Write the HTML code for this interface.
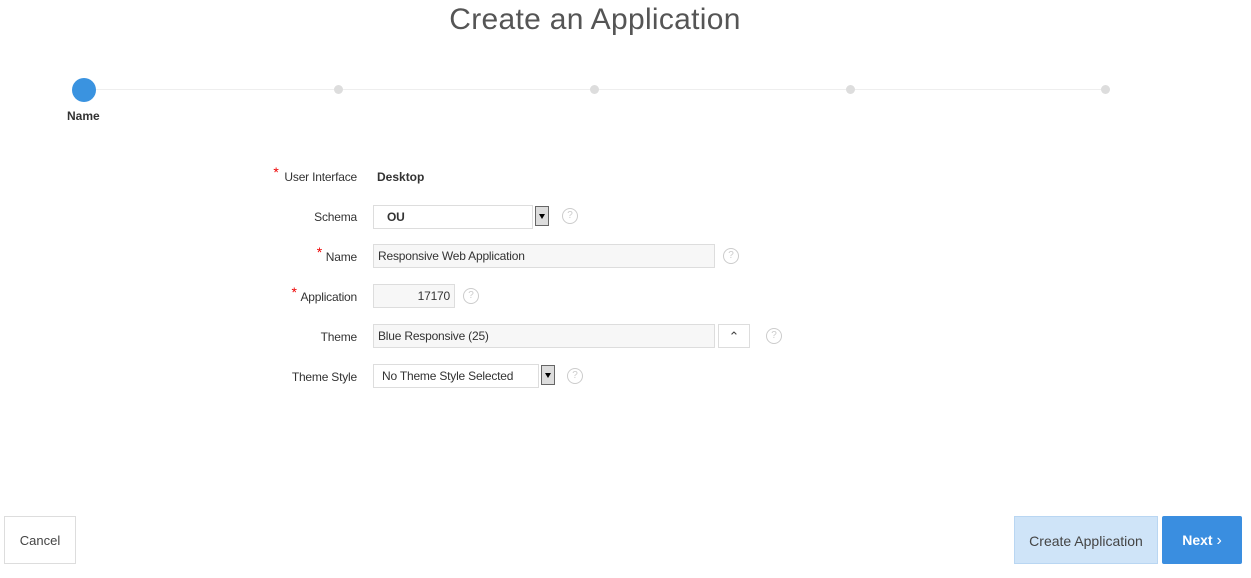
<!DOCTYPE html>
<html><head><style>
body{margin:0;width:1251px;height:578px;background:#fff;font-family:"Liberation Sans",sans-serif;position:relative;overflow:hidden;color:#333}
.a{position:absolute}
h1{position:absolute;left:0;width:1190px;text-align:center;top:3px;margin:0;font-weight:normal;font-size:30px;color:#555;letter-spacing:0.3px}
.lbl{position:absolute;right:894px;font-size:12px;color:#333;text-align:right;letter-spacing:-0.2px}
.req{color:#e00;font-size:14px;position:absolute;top:-6px;left:-9px}
.in{position:absolute;border:1px solid #ddd;background:#f7f7f7;font-size:12px;line-height:22px;padding:0 4px;box-sizing:border-box;height:24px;letter-spacing:-0.2px}
.help{position:absolute;width:14px;height:14px;border:1px solid #ccc;border-radius:50%;font-size:10px;color:#ccc;text-align:center;line-height:14px}
.dd{position:absolute;width:14px;height:20px;background:#ddd;border:1px solid #666;box-sizing:border-box}
.dd:after{content:"";position:absolute;left:3px;top:7px;border:3px solid transparent;border-top:5px solid #000}
</style></head><body>
<h1>Create an Application</h1>
<div class="a" style="left:84px;top:89px;width:1022px;height:1px;background:#eee"></div>
<div class="a" style="left:72px;top:78px;width:24px;height:24px;border-radius:50%;background:#3a93e0"></div>
<div class="a" style="left:334px;top:85px;width:9px;height:9px;border-radius:50%;background:#ddd"></div>
<div class="a" style="left:590px;top:85px;width:9px;height:9px;border-radius:50%;background:#ddd"></div>
<div class="a" style="left:846px;top:85px;width:9px;height:9px;border-radius:50%;background:#ddd"></div>
<div class="a" style="left:1101px;top:85px;width:9px;height:9px;border-radius:50%;background:#ddd"></div>
<div class="a" style="left:67px;top:109px;font-size:12px;font-weight:bold">Name</div>

<div class="lbl" style="top:170px"><span class="req" style="left:-11px">*</span>User Interface</div>
<div class="a" style="left:377px;top:170px;font-size:12px;font-weight:bold">Desktop</div>

<div class="lbl" style="top:210px">Schema</div>
<div class="in" style="left:373px;top:205px;width:160px;background:#fff;font-weight:bold;padding-left:13px">OU</div>
<div class="dd" style="left:535px;top:206px"></div>
<div class="help" style="left:562px;top:208px">?</div>

<div class="lbl" style="top:250px"><span class="req">*</span>Name</div>
<div class="in" style="left:373px;top:244px;width:342px">Responsive Web Application</div>
<div class="help" style="left:723px;top:248px">?</div>

<div class="lbl" style="top:290px"><span class="req">*</span>Application</div>
<div class="in" style="left:373px;top:284px;width:82px;text-align:right">17170</div>
<div class="help" style="left:463px;top:288px">?</div>

<div class="lbl" style="top:330px">Theme</div>
<div class="in" style="left:373px;top:324px;width:342px">Blue Responsive (25)</div>
<div class="a" style="left:718px;top:324px;width:32px;height:24px;border:1px solid #ddd;box-sizing:border-box;text-align:center;font-size:13px;line-height:24px;color:#444">&#8963;</div>
<div class="help" style="left:766px;top:328px">?</div>

<div class="lbl" style="top:370px">Theme Style</div>
<div class="in" style="left:373px;top:364px;width:166px;background:#fff;padding-left:8px">No Theme Style Selected</div>
<div class="dd" style="left:541px;top:365px"></div>
<div class="help" style="left:567px;top:368px">?</div>

<div class="a" style="left:4px;top:516px;width:72px;height:48px;border:1px solid #ddd;box-sizing:border-box;font-size:13px;line-height:48px;text-align:center;color:#444">Cancel</div>
<div class="a" style="left:1014px;top:516px;width:144px;height:48px;background:#cfe4f8;border:1px solid #b9d6f2;box-sizing:border-box;font-size:14px;line-height:48px;text-align:center;color:#444">Create Application</div>
<div class="a" style="left:1162px;top:516px;width:80px;height:48px;background:#3a8ee0;border-radius:2px;font-size:14px;font-weight:bold;line-height:48px;text-align:center;color:#fff">Next <span style="font-weight:normal;font-size:16px">&#8250;</span></div>
</body></html>
